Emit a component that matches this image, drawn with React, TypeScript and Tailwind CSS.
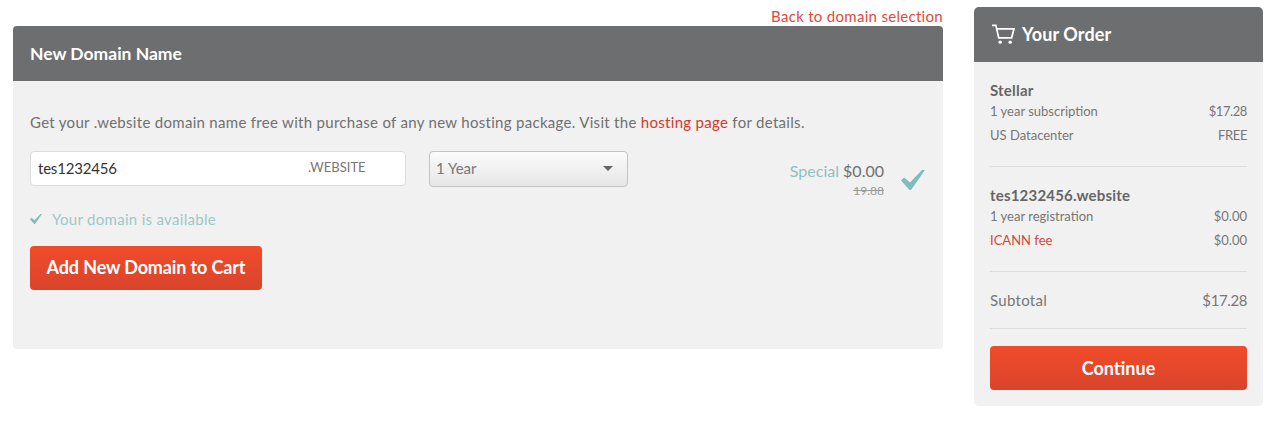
const font = "font-['Lato','Open_Sans',sans-serif]";

function Check({ className }: { className: string }) {
  return (
    <svg viewBox="0 0 24 20" className={className} fill="currentColor">
      <path d="M0 10.5 L3.2 7.5 L9 12.5 L21 0 L24 0 L10 20 L8.5 20 Z" />
    </svg>
  );
}

function Row({
  left,
  right,
  leftClass = "text-[#777]",
  rightClass = "",
}: {
  left: string;
  right: string;
  leftClass?: string;
  rightClass?: string;
}) {
  return (
    <div className="flex justify-between text-[13px] leading-[24px] text-[#777]">
      <span className={leftClass}>{left}</span>
      <span className={rightClass}>{right}</span>
    </div>
  );
}

export default function App() {
  return (
    <div className={`${font} flex h-[423px] w-[1280px] overflow-hidden bg-white pl-[13px] pt-[7px]`}>
      <div className="w-[930px]">
        <div className="flex h-[19px] justify-end text-[15px] leading-[19px] tracking-[0.3px] text-[#e0493a]">
          Back to domain selection
        </div>
        <div className="h-[323px] overflow-hidden rounded-[4px] bg-[#f1f1f1]">
          <div className="flex h-[55px] items-center bg-[#6d6e70] px-[17px] pt-[1px] text-[17.5px] font-bold text-white">
            New Domain Name
          </div>
          <div className="px-[17px]">
            <p className="mt-[31px] text-[15px] leading-[20px] tracking-[0.3px] text-[#707070]">
              Get your .website domain name free with purchase of any new hosting package. Visit the{" "}
              <span className="text-[#d2382c]">hosting page</span> for details.
            </p>
            <div className="mt-[19px] flex items-start">
              <div className="flex h-[35px] w-[376px] items-center rounded-[4px] border border-[#dcdcdc] bg-white pl-[7px]">
                <span className="w-[270px] text-[15px] tracking-[-0.2px] text-[#333]">tes1232456</span>
                <span className="pb-[1px] text-[13px] text-[#777]">.WEBSITE</span>
              </div>
              <div className="ml-[23px] flex h-[36px] w-[199px] items-center justify-between rounded-[4px] border border-[#c4c4c4] bg-gradient-to-b from-[#fbfbfb] to-[#e6e6e6] pb-[1px] pl-[6px] pr-[14px] text-[15px] text-[#777]">
                <span>1 Year</span>
                <span className="h-0 w-0 border-x-[5px] border-t-[5px] border-x-transparent border-t-[#666]" />
              </div>
              <div className="ml-auto mr-[1px] mt-[9px] flex items-start">
                <div className="text-right">
                  <div className="text-[16px] leading-[22px]">
                    <span className="text-[#8fc1c1]">Special</span> <span className="text-[#707070]">$0.00</span>
                  </div>
                  <div className="mt-[2px] text-[12px] leading-[14px] text-[#999] line-through">19.88</div>
                </div>
                <Check className="ml-[17px] mt-[10px] h-[20px] w-[24px] text-[#7fbcbc]" />
              </div>
            </div>
            <div className="mt-[10px] flex h-[22px] items-center text-[15px] tracking-[0.3px] text-[#9cc9c9]">
              <Check className="mr-[10px] h-[10px] w-[12px] text-[#7fbcbc]" />
              Your domain is available
            </div>
            <button className="mt-[16px] flex h-[44px] w-[232px] items-center justify-center rounded-[4px] bg-gradient-to-b from-[#f04c2a] to-[#d9442c] pb-[2px] text-[18px] font-bold tracking-[-0.13px] text-white">
              Add New Domain to Cart
            </button>
          </div>
        </div>
      </div>
      <div className="ml-[31px] h-[399px] w-[289px] overflow-hidden rounded-[5px] bg-[#f1f1f1]">
        <div className="flex h-[55px] items-center bg-[#6d6e70] px-[17px] text-[18px] font-bold tracking-[0.1px] text-white">
          <svg viewBox="0 0 26 22" className="mr-[6px] h-[21px] w-[25px]" fill="none" stroke="white" strokeWidth="1.8">
            <path d="M1 1.5 H5 L8 14.5 H21.5 L24 5 H6" />
            <circle cx="9.5" cy="19" r="1.8" fill="white" stroke="none" />
            <circle cx="20" cy="19" r="1.8" fill="white" stroke="none" />
          </svg>
          Your Order
        </div>
        <div className="px-[16px]">
          <div className="mt-[18px] text-[15px] font-bold leading-[20px] tracking-[0.2px] text-[#666]">Stellar</div>
          <div className="mt-[-1px]">
            <Row left="1 year subscription" right="$17.28" rightClass="tracking-[-0.4px]" />
            <Row left="US Datacenter" right="FREE" rightClass="tracking-[-0.4px]" />
          </div>
          <div className="mt-[19px] h-[1px] bg-[#dcdcdc]" />
          <div className="mt-[18px] text-[15px] font-bold leading-[20px] tracking-[0.2px] text-[#666]">tes1232456.website</div>
          <div className="mt-[-1px]">
            <Row left="1 year registration" right="$0.00" />
            <Row left="ICANN fee" right="$0.00" leftClass="text-[#d2483c]" />
          </div>
          <div className="mt-[19px] h-[1px] bg-[#dcdcdc]" />
          <div className="flex h-[56px] items-center justify-between text-[15px] text-[#777]">
            <span className="tracking-[0.3px]">Subtotal</span>
            <span className="tracking-[-0.4px]">$17.28</span>
          </div>
          <div className="h-[1px] bg-[#dcdcdc]" />
          <button className="mt-[17px] flex h-[44px] w-full items-center justify-center rounded-[4px] bg-gradient-to-b from-[#f04c2a] to-[#d9442c] text-[18px] font-bold text-white">
            Continue
          </button>
        </div>
      </div>
    </div>
  );
}
